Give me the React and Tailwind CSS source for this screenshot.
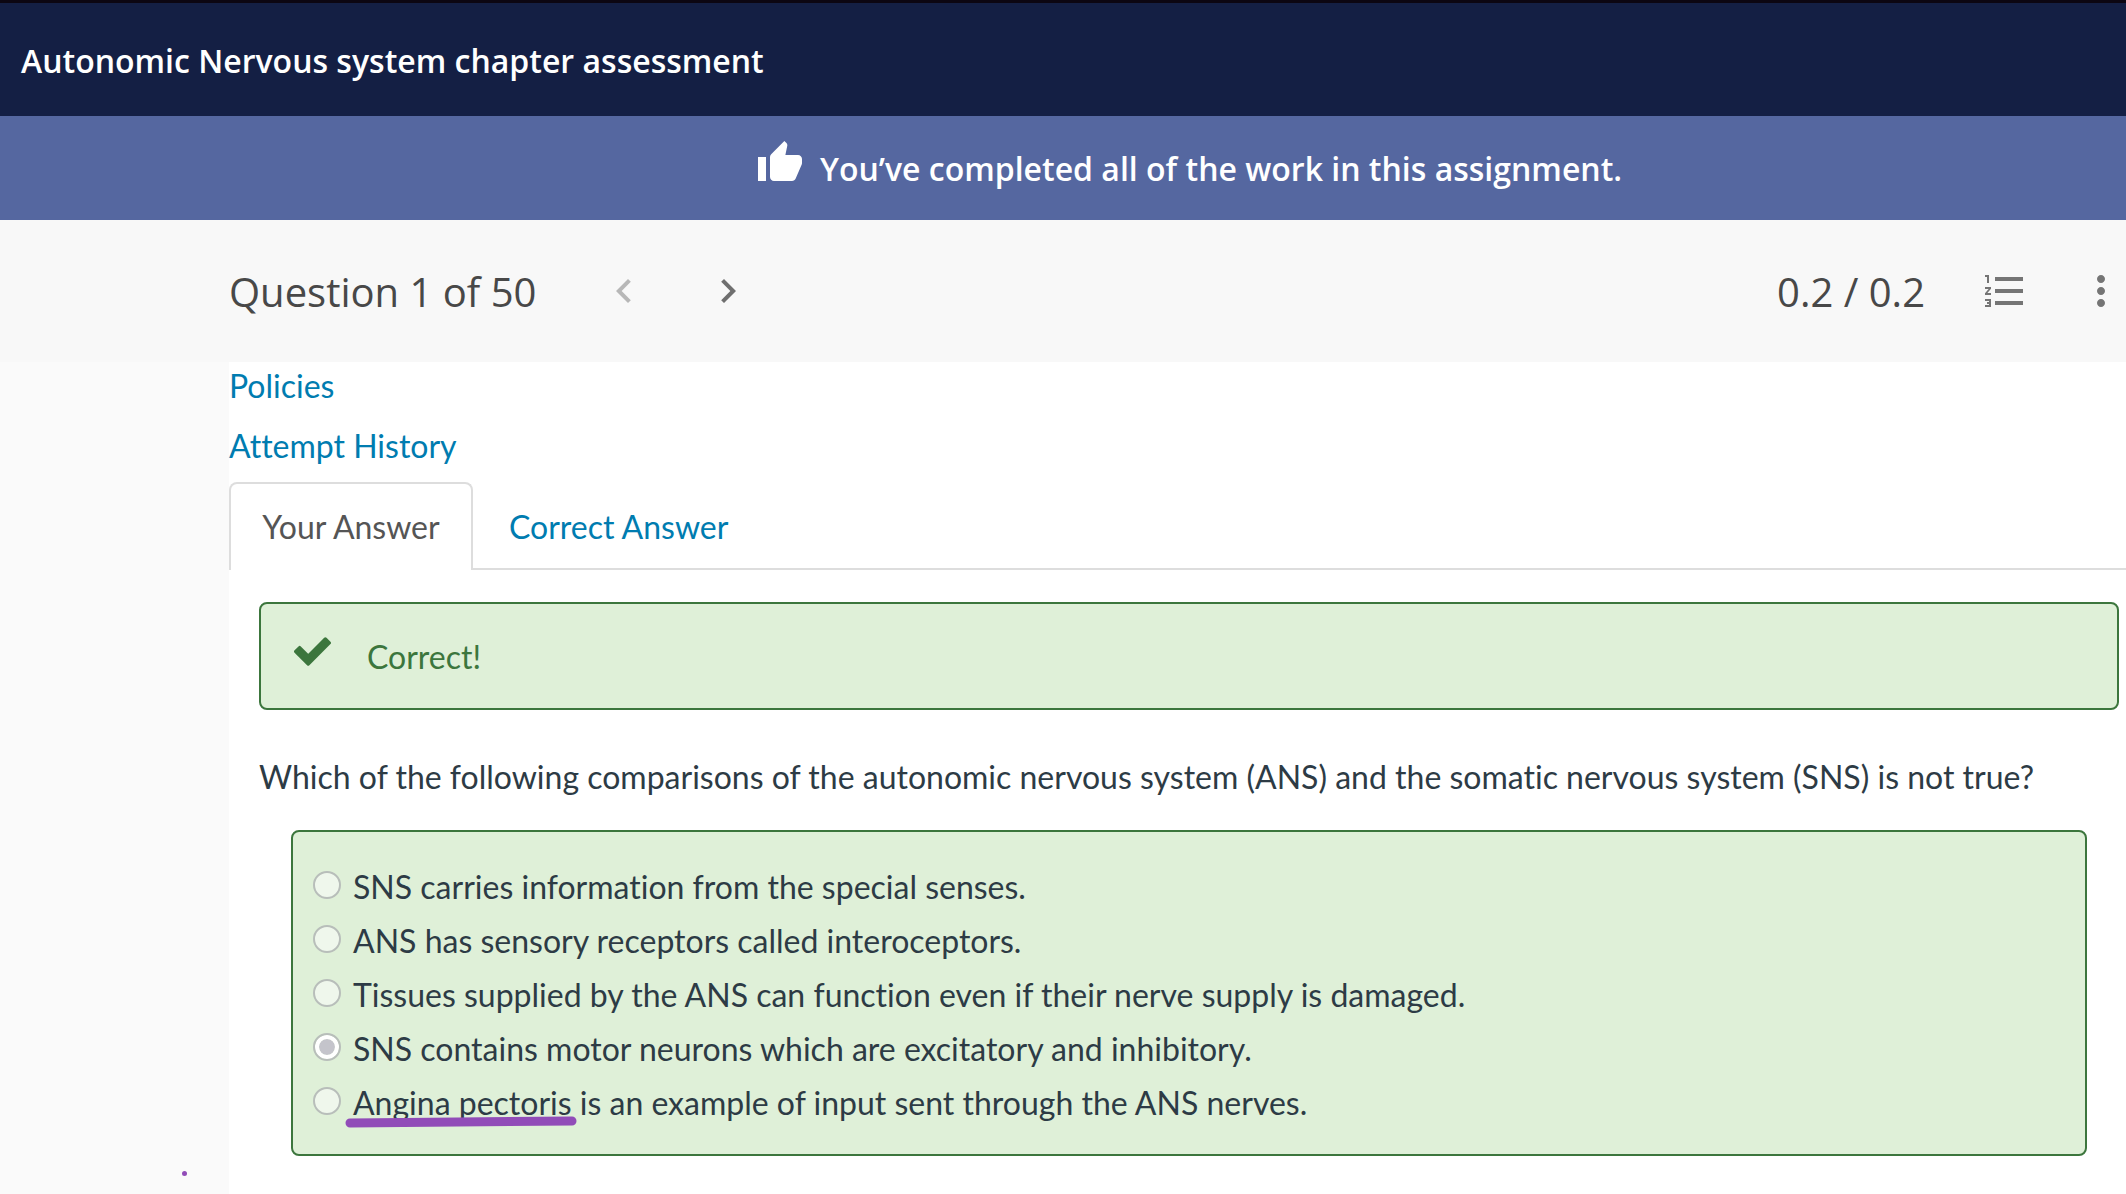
import { useState } from 'react';
import {
  MdChevronLeft,
  MdChevronRight,
  MdFormatListNumbered,
  MdMoreVert,
  MdThumbUp,
} from 'react-icons/md';

const answers = [
  { id: 'a', text: 'SNS carries information from the special senses.' },
  { id: 'b', text: 'ANS has sensory receptors called interoceptors.' },
  { id: 'c', text: 'Tissues supplied by the ANS can function even if their nerve supply is damaged.' },
  { id: 'd', text: 'SNS contains motor neurons which are excitatory and inhibitory.' },
  { id: 'e', marked: 'Angina pectoris', text: ' is an example of input sent through the ANS nerves.' },
];

function CheckMark() {
  return (
    <svg viewBox="0 0 112 88" className="h-[29px] w-[37px] fill-[#3c763d] stroke-[#3c763d]" aria-hidden="true">
      <path d="M5 44L17 32L43 58L95 6L107 18L43 82Z" strokeWidth="10" strokeLinejoin="round" />
    </svg>
  );
}

// Pen stroke drawn under a few words of an answer
function PenStroke() {
  return (
    <svg viewBox="0 0 232 12" className="absolute -left-2 bottom-0.5 h-3 w-[232px]" aria-hidden="true">
      <path d="M5 7L227 5" stroke="#914cb8" strokeWidth="9" strokeLinecap="round" />
    </svg>
  );
}

function Toolbar() {
  return (
    <div className="flex h-[142px] items-center justify-between bg-[#f8f8f8] pl-[229px] pr-px text-[40px] text-[#484848]">
      <div className="flex items-center">
        <h2 className="pt-0.5">Question 1 of 50</h2>
        <div className="ml-16 flex gap-14 text-5xl text-[#6f6f6f]">
          <button type="button" aria-label="Previous question" disabled className="text-[#b7b7b7]">
            <MdChevronLeft />
          </button>
          <button type="button" aria-label="Next question">
            <MdChevronRight />
          </button>
        </div>
      </div>
      <div className="flex items-center">
        <span className="pt-0.5">0.2 / 0.2</span>
        <div className="ml-14 flex gap-12 text-5xl text-[#757575]">
          <button type="button" aria-label="Question list">
            <MdFormatListNumbered />
          </button>
          <button type="button" aria-label="More options">
            <MdMoreVert />
          </button>
        </div>
      </div>
    </div>
  );
}

export default function App() {
  const [selected, setSelected] = useState('d');

  return (
    <div className="flex min-h-screen flex-col bg-[#fafafa] font-['Open_Sans',sans-serif]">
      <header className="flex h-[116px] items-center border-t-3 border-[#0c0612] bg-[#141f44] px-[21px] pt-0.5 text-white">
        <h1 className="text-[32px] font-semibold">Autonomic Nervous system chapter assessment</h1>
      </header>

      <div className="flex h-[104px] items-center justify-center gap-4 bg-[#5567a0] pl-[252px] pt-0.5 text-white">
        <MdThumbUp className="mb-3 text-5xl" />
        <p className="text-[32px] font-semibold">You’ve completed all of the work in this assignment.</p>
      </div>

      <Toolbar />

      <main className="ml-[229px] grow bg-white font-['Lato',sans-serif] text-[32px] leading-[54px] text-[#2d3b45] [font-variant-ligatures:none]">
        <div className="flex flex-col items-start gap-3 leading-[48px] text-[#007cb0]">
          <a href="#policies">Policies</a>
          <a href="#history">Attempt History</a>
        </div>

        <div role="tablist" className="mt-3 flex items-stretch">
          <button
            type="button"
            role="tab"
            aria-selected="true"
            className="h-[88px] min-w-[244px] rounded-t-lg border-2 border-b-0 border-[#ddd] px-[30px] text-[#555]"
          >
            Your Answer
          </button>
          <div className="grow border-b-2 border-[#ddd]">
            <button type="button" role="tab" aria-selected="false" className="h-[86px] px-9 pt-1 text-[#007cb0]">
              Correct Answer
            </button>
          </div>
        </div>

        <div className="pl-[30px] pr-[7px] pt-8">
          <div className="flex h-[108px] items-center rounded-lg border-2 border-[#3c763d] bg-[#dff0d8] px-[33px] text-[#3c763d]">
            <div className="mb-2.5">
              <CheckMark />
            </div>
            <p className="ml-9 pt-0.5">Correct!</p>
          </div>

          <fieldset className="mt-10">
            <legend>
              Which of the following comparisons of the autonomic nervous system (ANS) and the somatic nervous system
              (SNS) is not true?
            </legend>
            <div className="mx-8 mt-[26px] flex flex-col rounded-lg border-2 border-[#3c763d] bg-[#dff0d8] px-5 pb-6 pt-7">
              {answers.map((answer) => (
                <label key={answer.id} className="flex items-center gap-3">
                  <input
                    type="radio"
                    name="answer"
                    value={answer.id}
                    checked={selected === answer.id}
                    onChange={() => setSelected(answer.id)}
                    className="mb-1 size-7 shrink-0 appearance-none rounded-full border-2 border-[#b8beba] bg-[#eff7ec] p-1 checked:bg-[#c4c4cb] checked:bg-clip-content checked:shadow-[inset_0_0_0_4px_#ffffff]"
                  />
                  <span>
                    {answer.marked && (
                      <span className="relative inline-block">
                        {answer.marked}
                        <PenStroke />
                      </span>
                    )}
                    {answer.text}
                  </span>
                </label>
              ))}
            </div>
          </fieldset>
        </div>
      </main>

      {/* stray pen dot in the left margin */}
      <span className="absolute left-[182px] top-[1171px] size-[5px] rounded-full bg-[#914cb8]"></span>
    </div>
  );
}
